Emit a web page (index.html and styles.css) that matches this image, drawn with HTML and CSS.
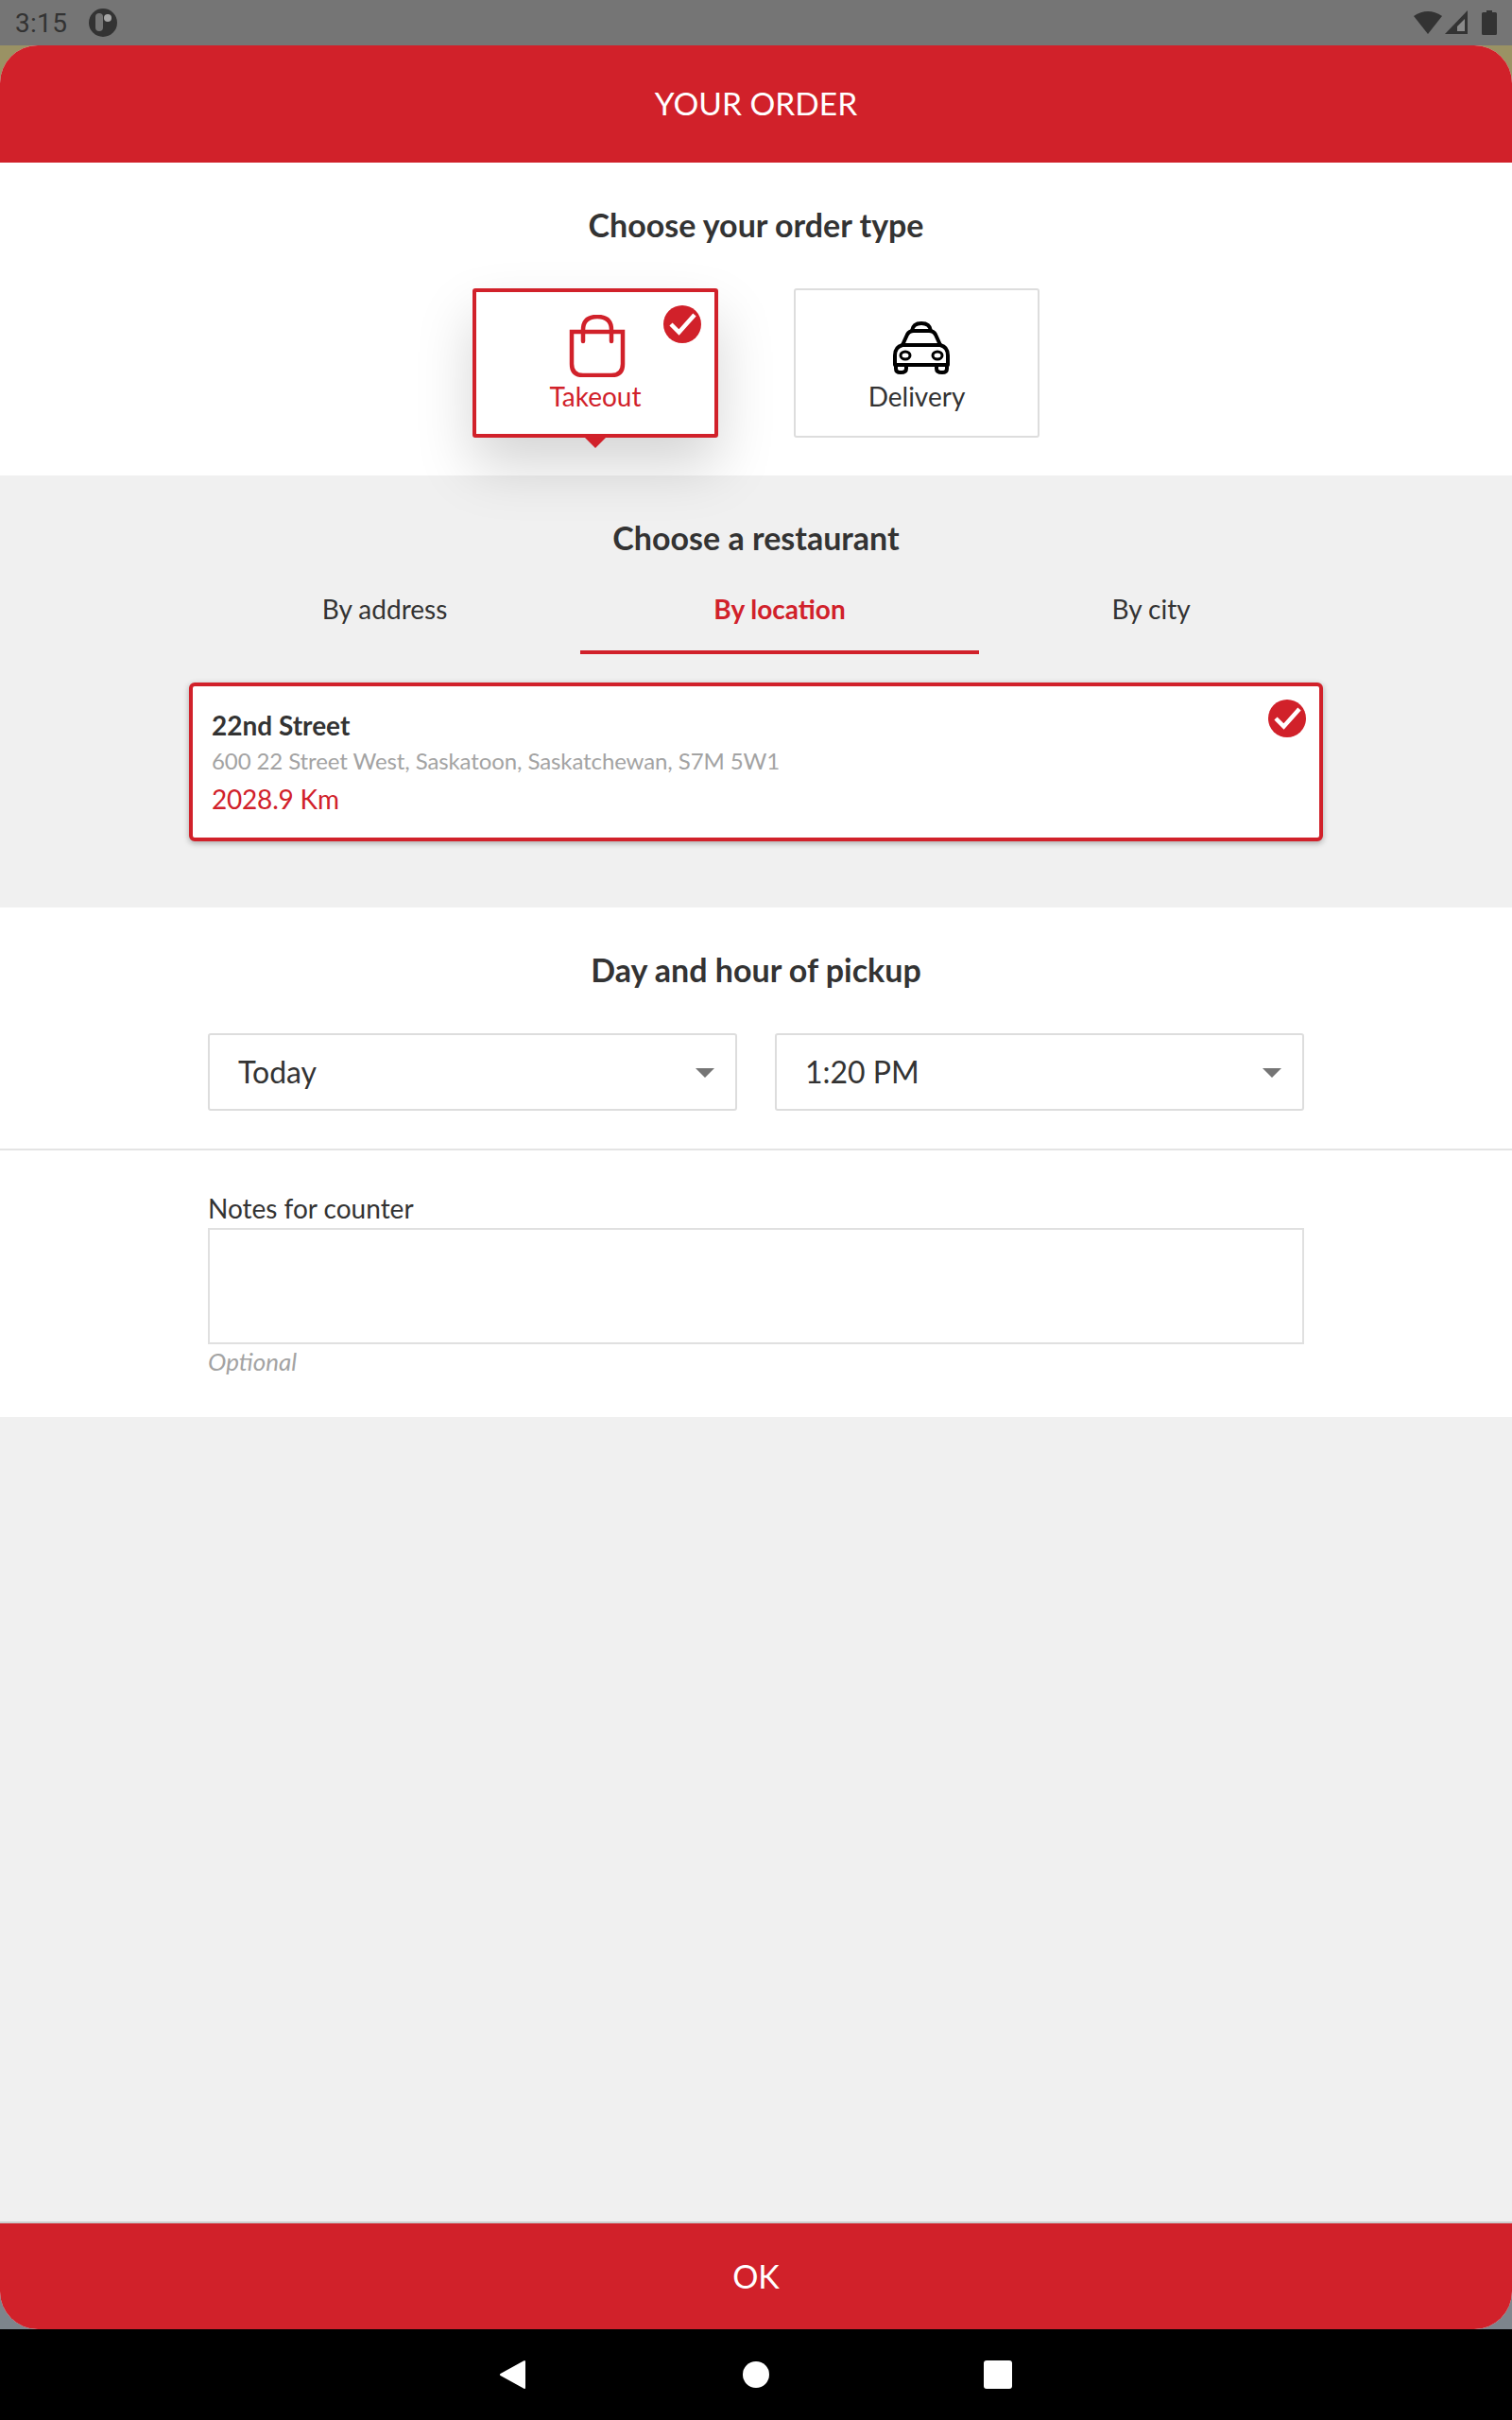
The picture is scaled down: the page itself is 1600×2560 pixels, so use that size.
FILE: index.html
```html
<!DOCTYPE html>
<html lang="en">
<head>
<meta charset="utf-8">
<title>Your order</title>
<link rel="stylesheet" href="styles.css">
</head>
<body>
<div class="phone">
  <div class="status">
    <span class="time">3:15</span>
    <svg class="logo" width="30" height="30" viewBox="0 0 30 30"><circle cx="15" cy="15" r="15" fill="#333"/><rect x="7" y="5" width="8" height="19" rx="4" fill="#757575"/><circle cx="20" cy="10" r="4" fill="#a5a5a5"/></svg>
    <span class="status-gap"></span>
    <svg width="30" height="26" viewBox="0 0 30 26"><path d="M0 6Q15 -4 30 6L15 25Z" fill="#333"/></svg>
    <svg class="signal" width="24" height="26" viewBox="0 0 24 26"><path d="M0 25L24 0V25Z" fill="#333"/><path d="M13 17L21 9V22H13Z" fill="#8a8a8a"/></svg>
    <svg class="battery" width="16" height="26" viewBox="0 0 16 26"><path d="M5 0H11V2H14.5Q16 2 16 3.500V24.500Q16 26 14.500 26H1.500Q0 26 0 24.500V3.500Q0 2 1.500 2H5Z" fill="#333"/></svg>
  </div>
  <div class="backdrop">
    <main class="sheet">
      <header class="sheet-head">YOUR ORDER</header>
      <section class="panel panel-type">
        <h2 class="title">Choose your order type</h2>
        <div class="types">
          <div class="type type-on">
            <svg class="bag" width="60" height="66" viewBox="0 0 60 66" fill="none" stroke="#d1212a" stroke-width="4.500"><path d="M3 18H57V52Q57 64 45 64H15Q3 64 3 52Z"/><path d="M15 28V16Q15 2 30 2Q45 2 45 16V28" stroke-linecap="round"/></svg>
            <span class="type-label">Takeout</span>
            <svg class="check check-type" width="40" height="40" viewBox="0 0 40 40"><circle cx="20" cy="20" r="20" fill="#d1212a"/><path d="M8 20L16.500 28.500L33 10" fill="none" stroke="#fff" stroke-width="4.500"/></svg>
            <span class="pointer"></span>
          </div>
          <div class="type">
            <svg class="taxi" width="60" height="56" viewBox="0 0 60 56" fill="none" stroke="#000" stroke-width="4" stroke-linejoin="round"><path d="M10 25L15 14Q17 10 22 10H38Q43 10 45 14L50 25"/><path d="M20 10Q21 2 30 2Q39 2 40 10"/><path d="M10 25H50Q58 27 58 36V46H2V36Q2 27 10 25Z"/><path d="M3 46V50Q3 54 8 54Q14 54 14 50V46M46 46V50Q46 54 52 54Q57 54 57 50V46"/><ellipse cx="13" cy="36" rx="5" ry="4" stroke-width="3"/><ellipse cx="47" cy="36" rx="5" ry="4" stroke-width="3"/></svg>
            <span class="type-label">Delivery</span>
          </div>
        </div>
      </section>
      <section class="panel-place">
        <h2 class="title">Choose a restaurant</h2>
        <div class="tabs">
          <div class="tab">By address</div>
          <div class="tab tab-on">By location</div>
          <div class="tab">By city</div>
        </div>
        <article class="place">
          <div class="place-name">22nd Street</div>
          <div class="place-address">600 22 Street West, Saskatoon, Saskatchewan, S7M 5W1</div>
          <div class="place-distance">2028.9 Km</div>
          <svg class="check check-place" width="40" height="40" viewBox="0 0 40 40"><circle cx="20" cy="20" r="20" fill="#d1212a"/><path d="M8 20L16.500 28.500L33 10" fill="none" stroke="#fff" stroke-width="4.500"/></svg>
        </article>
      </section>
      <section class="panel panel-time">
        <h2 class="title">Day and hour of pickup</h2>
        <div class="selects">
          <div class="select">Today<span class="caret"></span></div>
          <div class="select">1:20 PM<span class="caret"></span></div>
        </div>
        <div class="notes">
          <label class="notes-label" for="notes">Notes for counter</label>
          <textarea class="notes-input" id="notes"></textarea>
          <div class="notes-hint">Optional</div>
        </div>
      </section>
      <div class="filler"></div>
      <footer class="sheet-foot">OK</footer>
    </main>
  </div>
  <nav class="nav">
    <svg width="28" height="32" viewBox="0 0 28 32"><path d="M26 1.500L1.500 15Q0 16 1.500 17L26 30.500Q28 32 28 29.500V2.500Q28 0 26 1.500Z" fill="#fff"/></svg>
    <span class="nav-home"></span>
    <span class="nav-recent"></span>
  </nav>
</div>
</body>
</html>
```
FILE: styles.css
```css
* { box-sizing: border-box; }
html, body { margin: 0; padding: 0; }
body { font-family: Lato, "Open Sans", sans-serif; color: #333; background: #000; }
.phone { width: 1600px; height: 2560px; display: flex; flex-direction: column; overflow: hidden; }

.status { height: 48px; flex: none; background: #757575; display: flex; align-items: center; padding: 0 16px; }
.time { font-family: Roboto, sans-serif; font-size: 28px; color: #333; width: 78px; letter-spacing: .3px; }
.logo { display: block; }
.status-gap { flex: 1; }
.signal { margin-left: 3px; }
.battery { margin-left: 15px; }

.backdrop { flex: 1; min-height: 0; background: linear-gradient(#9a9264 0, #9a9264 50%, #7d858c 50%, #7d858c 100%); display: flex; }
.sheet { flex: 1; border-radius: 40px; overflow: hidden; background: #f0f0f0; display: flex; flex-direction: column; }
.sheet-head { height: 124px; flex: none; background: #d1212a; color: #fff; font-size: 33.500px; padding-bottom: 2px; display: flex; align-items: center; justify-content: center; }
.sheet-foot { height: 114px; flex: none; background: #d1212a; border-top: 2px solid #ccc; color: #fff; font-size: 34px; padding-bottom: 2px; display: flex; align-items: center; justify-content: center; }
.filler { flex: 1; }

.panel { background: #fff; position: relative; }
.panel-type { padding: 46px 0 40px; z-index: 2; background: transparent; }
.panel-type::before { content: ""; position: absolute; inset: 0; background: #fff; z-index: -1; }
.title { margin: 0; font-size: 34px; line-height: 40px; font-weight: 700; text-align: center; color: #333; }

.types { display: flex; justify-content: center; gap: 80px; margin-top: 47px; }
.type { position: relative; width: 260px; height: 158px; background: #fff; border: 2px solid #ddd; border-radius: 3px; display: flex; flex-direction: column; align-items: center; font-size: 28px; }
.type-on { border: 4px solid #d1212a; color: #d1212a; box-shadow: 0 30px 60px rgba(0,0,0,.17); }
.type-label { line-height: 40px; }
.bag { margin-top: 24px; margin-left: 4px; display: block; }
.taxi { margin-top: 33px; margin-bottom: 3px; margin-left: 10px; display: block; }
.check { position: absolute; display: block; }
.check-type { top: 14px; right: 14px; }
.pointer { position: absolute; left: 114px; bottom: -15px; width: 0; height: 0; border: 12px solid transparent; border-bottom: 0; border-top-color: #d1212a; }

.panel-place { height: 457px; padding: 46px 200px 0; }
.tabs { display: grid; grid-template-columns: 414px 422px 364px; margin-top: 16px; }
.tab { padding: 19px 0 24px; font-size: 28px; line-height: 40px; text-align: center; border-bottom: 4px solid transparent; }
.tab-on { color: #d1212a; font-weight: 700; border-bottom-color: #d1212a; }
.place { position: relative; margin-top: 30px; height: 168px; background: #fff; border: 4px solid #d1212a; border-radius: 6px; padding: 22px 20px 0; box-shadow: 0 2px 6px rgba(0,0,0,.3); }
.place-name { font-size: 28px; line-height: 38px; font-weight: 700; }
.place-address { font-size: 24px; line-height: 38px; letter-spacing: -.1px; color: #a3a3a3; }
.place-distance { font-size: 28px; line-height: 42px; letter-spacing: -.2px; color: #d1212a; }
.check-place { top: 14px; right: 14px; }

.panel-time { height: 539px; padding-top: 46px; }
.selects { display: grid; grid-template-columns: 560px 560px; gap: 40px; justify-content: center; margin-top: 47px; padding-bottom: 40px; border-bottom: 2px solid #e4e4e4; }
.select { position: relative; height: 82px; border: 2px solid #ddd; border-radius: 3px; padding-left: 30px; font-size: 32px; line-height: 78px; }
.caret { position: absolute; right: 22px; top: 35px; width: 0; height: 0; border: 10px solid transparent; border-bottom: 0; border-top-color: #757575; }

.notes { padding: 41px 220px 0; }
.notes-label { display: block; font-size: 28px; line-height: 40px; margin-bottom: 1px; }
.notes-input { display: block; width: 100%; height: 123px; border: 2px solid #e0e0e0; border-radius: 0; background: #fff; resize: none; padding: 0; margin: 0; outline: 0; }
.notes-hint { font-size: 26px; line-height: 36px; font-style: italic; color: #a3a3a3; }

.nav { height: 96px; flex: none; background: #000; display: flex; align-items: center; padding-left: 528px; }
.nav-home { width: 28px; height: 28px; border-radius: 50%; background: #fff; margin-left: 230px; }
.nav-recent { width: 30px; height: 30px; border-radius: 3px; background: #fff; margin-left: 227px; }
```
